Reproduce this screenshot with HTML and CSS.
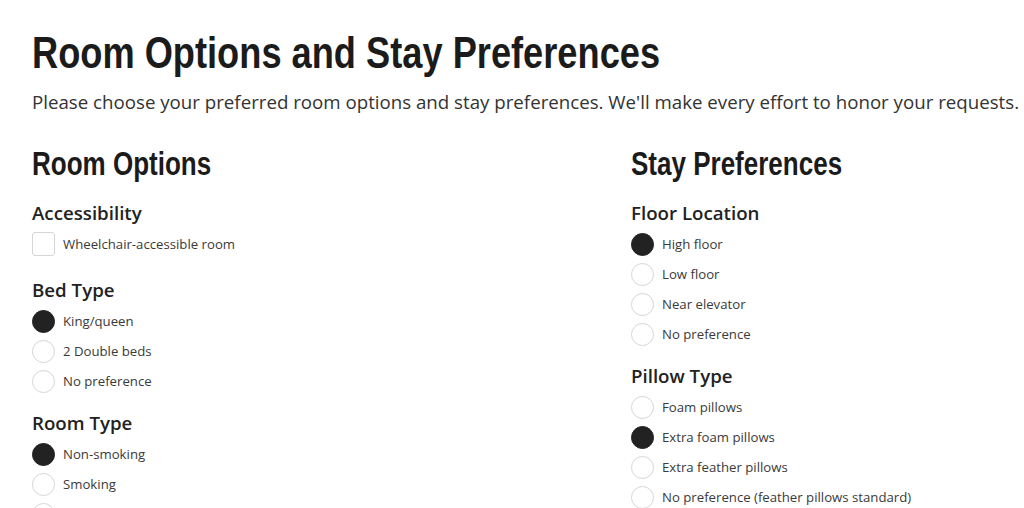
FILE: index.html
```html
<!DOCTYPE html>
<html lang="en">
<head>
<meta charset="utf-8">
<title>Room Options and Stay Preferences</title>
<link rel="stylesheet" href="styles.css">
</head>
<body>
<main class="page">
  <h1 class="title">Room Options and Stay Preferences</h1>
  <p class="intro">Please choose your preferred room options and stay preferences. We'll make every effort to honor your requests.</p>
  <div class="columns">
    <section class="col">
      <h2 class="section-title">Room Options</h2>
      <div class="group group-check">
        <h3 class="group-title">Accessibility</h3>
        <label class="option"><span class="box"></span><span class="label">Wheelchair-accessible room</span></label>
      </div>
      <div class="group">
        <h3 class="group-title">Bed Type</h3>
        <label class="option"><span class="radio on"></span><span class="label">King/queen</span></label>
        <label class="option"><span class="radio"></span><span class="label">2 Double beds</span></label>
        <label class="option"><span class="radio"></span><span class="label">No preference</span></label>
      </div>
      <div class="group">
        <h3 class="group-title">Room Type</h3>
        <label class="option"><span class="radio on"></span><span class="label">Non-smoking</span></label>
        <label class="option"><span class="radio"></span><span class="label">Smoking</span></label>
        <label class="option"><span class="radio"></span><span class="label">No preference</span></label>
      </div>
    </section>
    <section class="col">
      <h2 class="section-title">Stay Preferences</h2>
      <div class="group">
        <h3 class="group-title">Floor Location</h3>
        <label class="option"><span class="radio on"></span><span class="label">High floor</span></label>
        <label class="option"><span class="radio"></span><span class="label">Low floor</span></label>
        <label class="option"><span class="radio"></span><span class="label">Near elevator</span></label>
        <label class="option"><span class="radio"></span><span class="label">No preference</span></label>
      </div>
      <div class="group">
        <h3 class="group-title">Pillow Type</h3>
        <label class="option"><span class="radio"></span><span class="label">Foam pillows</span></label>
        <label class="option"><span class="radio on"></span><span class="label">Extra foam pillows</span></label>
        <label class="option"><span class="radio"></span><span class="label">Extra feather pillows</span></label>
        <label class="option"><span class="radio"></span><span class="label">No preference (feather pillows standard)</span></label>
      </div>
    </section>
  </div>
</main>
</body>
</html>
```

FILE: styles.css
```css
html, body {
  margin: 0;
  padding: 0;
  background: #fff;
}
body {
  font-family: "Open Sans", "Liberation Sans", sans-serif;
  color: #333;
  overflow: hidden;
}
.page {
  padding: 26px 0 0 32px;
  width: 1300px;
}
.title {
  margin: 0;
  font-family: "Liberation Sans", "Arial", sans-serif;
  font-weight: 700;
  font-size: 45px;
  line-height: 54px;
  color: #1b1b1b;
  transform: scaleX(0.805);
  transform-origin: left center;
  white-space: nowrap;
}
.intro {
  margin: 9px 0 0;
  font-size: 18.7px;
  line-height: 26px;
  color: #333;
  white-space: nowrap;
}
.columns {
  display: grid;
  grid-template-columns: 599px 599px;
  margin-top: 28px;
}
.section-title {
  margin: 0;
  font-family: "Liberation Sans", "Arial", sans-serif;
  font-weight: 700;
  font-size: 34px;
  line-height: 40px;
  color: #1b1b1b;
  transform: scaleX(0.765);
  transform-origin: left center;
  white-space: nowrap;
}
.group {
  margin-top: 14px;
}
.section-title + .group {
  margin-top: 17px;
}
.group-check {
  padding-bottom: 4px;
}
.group-title {
  margin: 0 0 3px;
  font-size: 18.7px;
  font-weight: 600;
  line-height: 26px;
  color: #222;
}
.option {
  display: flex;
  align-items: center;
  gap: 8px;
  height: 30px;
  font-size: 13.2px;
  color: #3a3a3a;
}
.radio {
  box-sizing: border-box;
  width: 23px;
  height: 23px;
  border-radius: 50%;
  border: 1px solid #d6d6d6;
  background: #fff;
  flex: none;
}
.radio.on {
  background: #222;
  border-color: #222;
}
.box {
  box-sizing: border-box;
  width: 23px;
  height: 24px;
  border-radius: 3px;
  border: 1px solid #d6d6d6;
  background: #fff;
  flex: none;
}
```
